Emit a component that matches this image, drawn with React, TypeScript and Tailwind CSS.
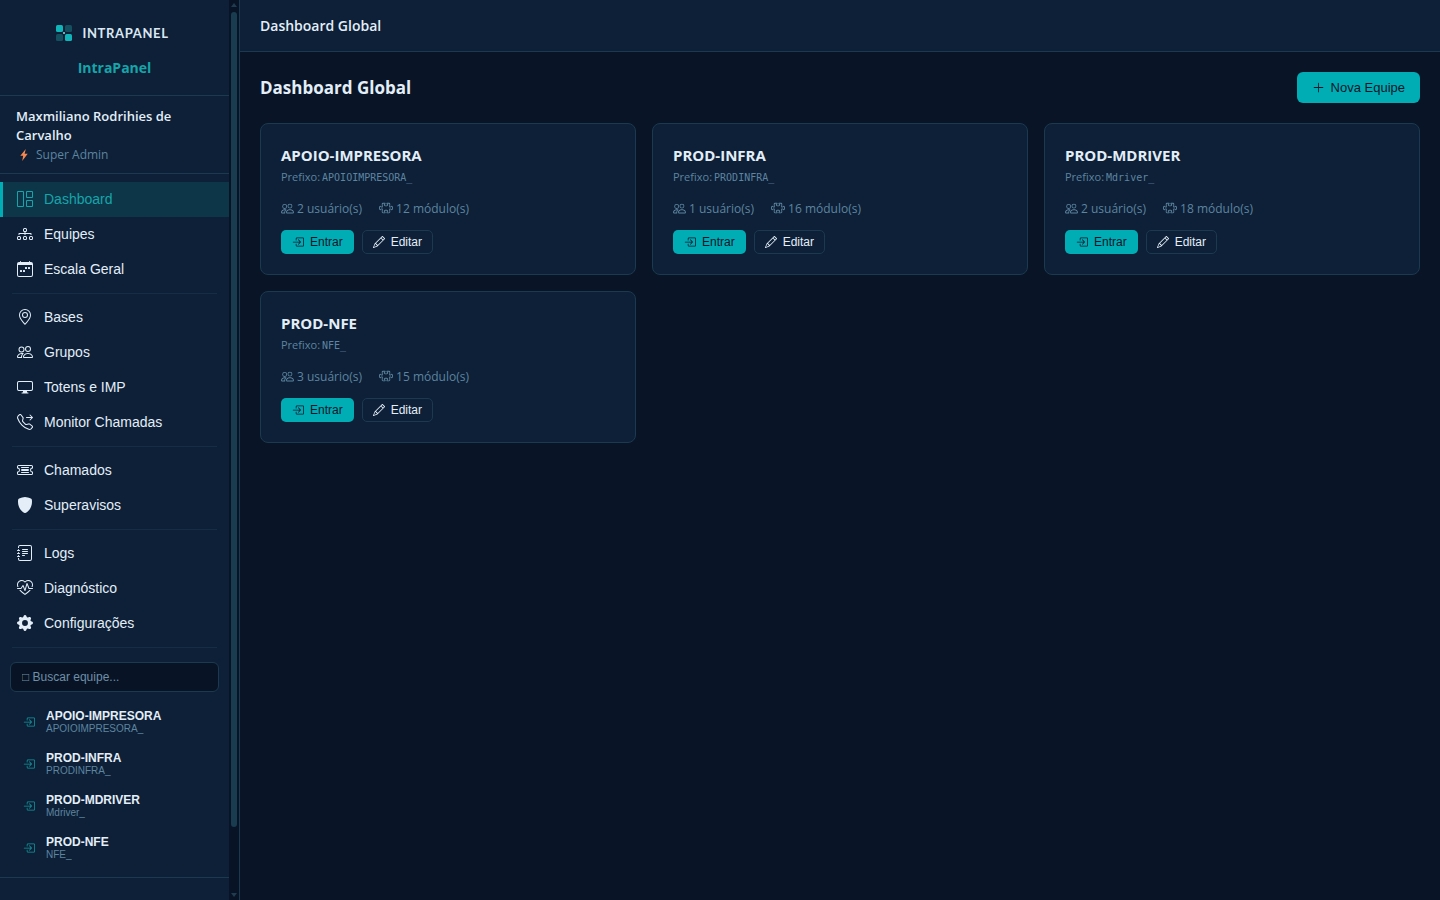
import * as React from "react";
import type { ReactNode } from "react";
import {
  BsGrid1X2, BsDiagram3, BsCalendarWeek, BsGeoAlt, BsPeople, BsDisplay, BsTelephoneForward,
  BsTicketDetailed, BsShieldFill, BsJournalText, BsHeartPulse, BsGearFill, BsBoxArrowInRight,
  BsPencil, BsPlusLg, BsPuzzle,
} from "react-icons/bs";

const sans = "font-['Open_Sans','Noto_Sans',sans-serif]";
const arial = "font-['Liberation_Sans',Arial,sans-serif]";

type Item = { label: string; icon: ReactNode; active?: boolean };

const groups: Item[][] = [
  [
    { label: "Dashboard", icon: <BsGrid1X2 />, active: true },
    { label: "Equipes", icon: <BsDiagram3 /> },
    { label: "Escala Geral", icon: <BsCalendarWeek /> },
  ],
  [
    { label: "Bases", icon: <BsGeoAlt /> },
    { label: "Grupos", icon: <BsPeople /> },
    { label: "Totens e IMP", icon: <BsDisplay /> },
    { label: "Monitor Chamadas", icon: <BsTelephoneForward /> },
  ],
  [
    { label: "Chamados", icon: <BsTicketDetailed /> },
    { label: "Superavisos", icon: <BsShieldFill /> },
  ],
  [
    { label: "Logs", icon: <BsJournalText /> },
    { label: "Diagnóstico", icon: <BsHeartPulse /> },
    { label: "Configurações", icon: <BsGearFill /> },
  ],
];

const teams = [
  { name: "APOIO-IMPRESORA", prefix: "APOIOIMPRESORA_", users: 2, modules: 12 },
  { name: "PROD-INFRA", prefix: "PRODINFRA_", users: 1, modules: 16 },
  { name: "PROD-MDRIVER", prefix: "Mdriver_", users: 2, modules: 18 },
  { name: "PROD-NFE", prefix: "NFE_", users: 3, modules: 15 },
];

function Logo() {
  return (
    <svg width="16" height="16" viewBox="0 0 16 16" aria-hidden="true">
      <rect width="7" height="7" rx="1.5" fill="#0fb5b8" />
      <rect x="9" width="7" height="7" rx="1.5" fill="#14505f" />
      <rect y="9" width="7" height="7" rx="1.5" fill="#14505f" />
      <rect x="9" y="9" width="7" height="7" rx="1.5" fill="#0fb5b8" />
      <circle cx="8" cy="8" r="1" fill="#8fdfe2" />
    </svg>
  );
}

function Bolt() {
  return (
    <svg width="16" height="12" viewBox="0 0 16 12" aria-hidden="true">
      <path d="M9.8 0 4.3 6.8h2.9L6.2 12l5.5-7.3H8.6z" fill="#f9874f" />
    </svg>
  );
}

function NavItem({ label, icon, active }: Item) {
  return (
    <a
      href="#"
      aria-current={active ? "page" : undefined}
      className={`flex h-[35px] items-center gap-[11px] border-l-[3px] pb-[2px] pl-[14px] text-sm ${
        active ? "border-[#00adb5] bg-[#0d3649] text-[#16a5aa]" : "border-transparent text-[#e3eef8]"
      }`}
    >
      <span className="text-base">{icon}</span>
      {label}
    </a>
  );
}

function Sidebar() {
  return (
    <aside className="flex w-60 shrink-0 border-r border-[#1b3a4f] bg-[#0d2037]">
      <div className="min-w-0 flex-1 overflow-hidden">
        <div className="flex flex-col items-center gap-4 border-b border-[#1b3a4f] pt-6 pb-[17px]">
          <div className="flex items-center gap-[10px] pr-1">
            <Logo />
            <span className="font-[Lato,sans-serif] text-[13px] leading-[18px] font-bold tracking-wider text-[#dbe7f2]">
              INTRAPANEL
            </span>
          </div>
          <div className="text-sm leading-5 font-bold text-[#16a5aa]">IntraPanel</div>
        </div>
        <div className="border-b border-[#1b3a4f] px-4 pt-[11px] pb-2">
          <div className="text-[13px] leading-[19px] font-semibold text-[#e3eef8]">
            Maxmiliano Rodrihies de Carvalho
          </div>
          <div className="flex items-center gap-1 text-xs leading-5 text-[#5d84a0]">
            <Bolt />
            Super Admin
          </div>
        </div>
        <nav className={`${arial} pt-2`}>
          {groups.map((items, i) => (
            <div key={i}>
              {items.map((item) => (
                <NavItem key={item.label} {...item} />
              ))}
              <hr className="mx-3 my-[6px] border-[#142e46]" />
            </div>
          ))}
        </nav>
        <div className={`${arial} border-b border-[#1b3a4f] px-[10px] py-2`}>
          <input
            type="search"
            aria-label="Buscar equipe"
            placeholder="□ Buscar equipe..."
            className="mb-[9px] block h-[30px] w-full rounded-md border border-[#1b3a4f] bg-[#081425] px-[11px] text-xs placeholder:text-[#6f8fa8]"
          />
          {teams.map((t) => (
            <a key={t.name} href="#" className="flex h-[42px] items-center gap-[11px] pl-[13px]">
              <BsBoxArrowInRight className="size-3 text-[#13999f]" />
              <span>
                <span className="block text-xs leading-[14px] font-bold text-[#e3eef8]">{t.name}</span>
                <span className="block text-[10px] leading-3 text-[#5d84a0]">{t.prefix}</span>
              </span>
            </a>
          ))}
        </div>
      </div>
      <div className="flex w-[10px] flex-col items-center bg-[#081425]" aria-hidden="true">
        <svg width="8" height="12" viewBox="0 0 8 12"><path d="M1 7l3-4 3 4z" fill="#1f3d50" /></svg>
        <div className="w-[6px] flex-[815] rounded-full bg-[#1a3c4f]" />
        <div className="flex-[61]" />
        <svg width="8" height="12" viewBox="0 0 8 12"><path d="M1 5l3 4 3-4z" fill="#1f3d50" /></svg>
      </div>
    </aside>
  );
}

function TeamCard({ name, prefix, users, modules }: (typeof teams)[number]) {
  return (
    <article className="rounded-lg border border-[#1b3a4f] bg-[#0d2037] p-5">
      <h2 className="text-[15px] leading-[22px] font-bold text-[#e3eef8]">{name}</h2>
      <p className="flex items-baseline gap-[2px] text-[11px] leading-[22px] text-[#5d84a0]">
        Prefixo: <span className="font-['DejaVu_Sans_Mono',monospace] text-[10px] leading-4">{prefix}</span>
      </p>
      <div className="mt-[11px] flex gap-[17px] text-xs leading-5 text-[#5d84a0]">
        <span className="flex items-center gap-[3px]"><BsPeople className="mb-[2px] size-[13px]" />{users} usuário(s)</span>
        <span className="flex items-center gap-[3px]"><BsPuzzle className="mb-[2px] size-[14px]" />{modules} módulo(s)</span>
      </div>
      <div className={`${arial} mt-[11px] flex gap-2 text-xs`}>
        <button className="flex h-6 items-center gap-[6px] rounded-[5px] bg-[#00adb5] px-[11px] text-[#0a1628]">
          <BsBoxArrowInRight />Entrar
        </button>
        <button className="flex h-6 items-center gap-[6px] rounded-[5px] border border-[#1b3a4f] px-[10px] text-[#e3eef8]">
          <BsPencil />Editar
        </button>
      </div>
    </article>
  );
}

export default function App() {
  return (
    <div className={`${sans} flex min-h-screen bg-[#091526]`}>
      <Sidebar />
      <div className="min-w-0 flex-1">
        <header className="flex h-[52px] items-center border-b border-[#1b3a4f] bg-[#0d2037] px-5 text-sm font-semibold text-[#e3eef8]">
          Dashboard Global
        </header>
        <main className="p-5">
          <div className="mb-5 flex items-center justify-between">
            <h1 className="text-[17px] leading-6 font-bold text-[#e3eef8]">Dashboard Global</h1>
            <button className={`${arial} flex h-[31px] items-center gap-[6px] rounded-md bg-[#00adb5] px-[15px] text-[13px] text-[#0a1628]`}>
              <BsPlusLg className="size-[13px]" />Nova Equipe
            </button>
          </div>
          <div className="grid grid-cols-3 gap-4">
            {teams.map((t) => (
              <TeamCard key={t.name} {...t} />
            ))}
          </div>
        </main>
      </div>
    </div>
  );
}
